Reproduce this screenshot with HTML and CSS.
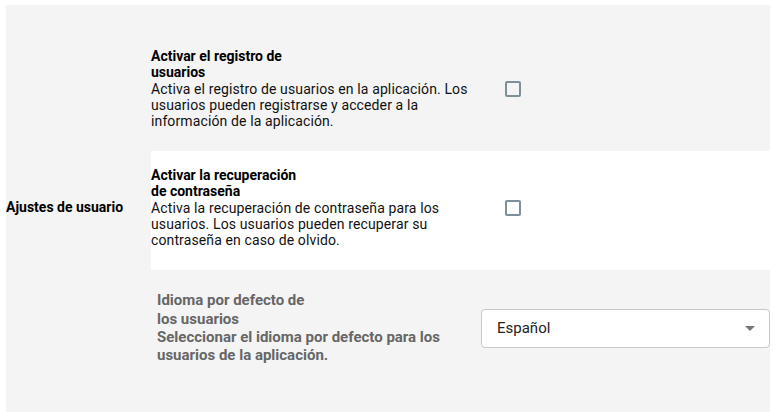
FILE: index.html
```html
<!DOCTYPE html>
<html lang="es">
<head>
<meta charset="utf-8">
<title>Ajustes de usuario</title>
<link rel="stylesheet" href="styles.css">
</head>
<body>
<section class="settings">
  <div class="group-label">Ajustes de usuario</div>
  <div class="rows">
    <div class="row row-first">
      <div class="text">
        <div class="title">Activar el registro de usuarios</div>
        <div class="desc">Activa el registro de usuarios en la aplicación. Los usuarios pueden registrarse y acceder a la información de la aplicación.</div>
      </div>
      <span class="checkbox" role="checkbox" aria-checked="false"></span>
    </div>
    <div class="row row-white">
      <div class="text">
        <div class="title">Activar la recuperación de contraseña</div>
        <div class="desc">Activa la recuperación de contraseña para los usuarios. Los usuarios pueden recuperar su contraseña en caso de olvido.</div>
      </div>
      <span class="checkbox" role="checkbox" aria-checked="false"></span>
    </div>
    <div class="row row-lang">
      <div class="text-muted">
        <div class="title-muted">Idioma por defecto de los usuarios</div>
        <div>Seleccionar el idioma por defecto para los usuarios de la aplicación.</div>
      </div>
      <div class="select">
        <span>Español</span>
        <span class="caret"></span>
      </div>
    </div>
  </div>
</section>
</body>
</html>
```
FILE: styles.css
```css
html, body {
  margin: 0;
  padding: 0;
  background: #ffffff;
}
body {
  font-family: Roboto, "Liberation Sans", sans-serif;
  font-size: 14px;
  color: #111;
}
.settings {
  margin: 5px 7px 0 6px;
  height: 407px;
  background: #f4f4f4;
  display: flex;
}
.group-label {
  width: 145px;
  flex: none;
  font-weight: 700;
  color: #000;
  display: flex;
  align-items: center;
  padding-bottom: 4px;
  box-sizing: border-box;
}
.rows {
  flex: 1;
  display: flex;
  flex-direction: column;
}
.row {
  display: flex;
  align-items: center;
}
.row-first {
  height: 146px;
  box-sizing: border-box;
  padding: 44px 0 22px 0;
}
.row-white {
  height: 119px;
  box-sizing: border-box;
  padding: 17px 0 22px 0;
  background: #ffffff;
}
.row-lang {
  flex: 1;
  box-sizing: border-box;
  padding: 21px 0 47px 6px;
}
.text {
  width: 320px;
  flex: none;
}
.title {
  width: 155px;
  font-weight: 700;
  color: #000;
  line-height: 15.5px;
}
.desc {
  line-height: 16px;
  margin-top: 1px;
  letter-spacing: 0.12px;
}
.checkbox {
  width: 16px;
  height: 16px;
  box-sizing: border-box;
  border: 2px solid #7d9099;
  border-radius: 2px;
  margin-left: 34px;
  flex: none;
}
.text-muted {
  width: 320px;
  flex: none;
  font-weight: 700;
  font-size: 15px;
  color: #666;
  line-height: 18.4px;
}
.title-muted {
  width: 155px;
}
.select {
  flex: 1;
  margin-left: 4px;
  height: 39px;
  box-sizing: border-box;
  background: #fff;
  border: 1px solid #c8c8c8;
  border-radius: 4px;
  display: flex;
  align-items: center;
  justify-content: space-between;
  padding: 0 14px 0 15px;
  color: #222;
  font-size: 15px;
}
.caret {
  width: 0;
  height: 0;
  border-left: 5px solid transparent;
  border-right: 5px solid transparent;
  border-top: 5px solid #777;
}
```
